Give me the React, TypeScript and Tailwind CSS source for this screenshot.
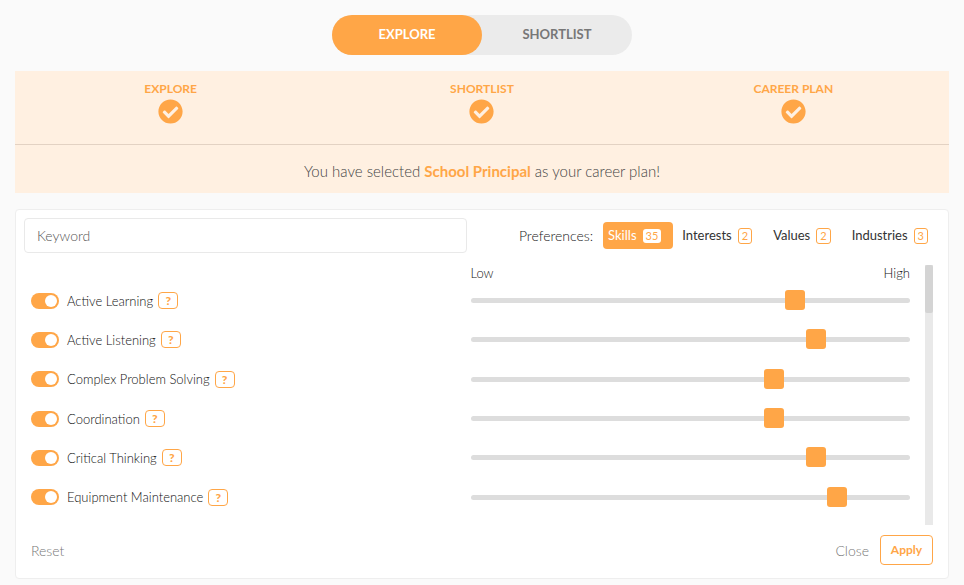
import { useState } from 'react';
import { FaCheckCircle } from 'react-icons/fa';

const steps = ['EXPLORE', 'SHORTLIST', 'CAREER PLAN'];

const preferences = [
  { name: 'Skills', count: 35 },
  { name: 'Interests', count: 2 },
  { name: 'Values', count: 2 },
  { name: 'Industries', count: 3 },
];

const skills = [
  { id: 'active-learning', name: 'Active Learning', level: 75 },
  { id: 'active-listening', name: 'Active Listening', level: 80 },
  { id: 'problem-solving', name: 'Complex Problem Solving', level: 70 },
  { id: 'coordination', name: 'Coordination', level: 70 },
  { id: 'critical-thinking', name: 'Critical Thinking', level: 80 },
  { id: 'maintenance', name: 'Equipment Maintenance', level: 85 },
];

function ViewSwitch() {
  return (
    <nav className="mx-auto flex w-75 rounded-full bg-[#ebebeb] text-[13px] font-bold">
      <button type="button" className="h-10 flex-1 rounded-full bg-[#ffa647] text-white">
        EXPLORE
      </button>
      <button type="button" className="h-10 flex-1 rounded-full text-[#777]">
        SHORTLIST
      </button>
    </nav>
  );
}

function PlanBanner() {
  return (
    <section className="mt-4 bg-[#fff0e1]">
      <ol className="grid h-[74px] grid-cols-3 border-b border-[#e3d2c3] pt-2.5">
        {steps.map((step) => (
          <li key={step} className="flex flex-col items-center text-[#ffa647]">
            <span className="text-[12px] leading-4 font-bold">{step}</span>
            <FaCheckCircle className="mt-0.5 size-[25px]" />
          </li>
        ))}
      </ol>
      <p className="pt-3.5 pb-2.5 text-center text-[15px] leading-6 text-[#444]">
        You have selected <strong className="font-bold text-[#ffa647]">School Principal</strong> as
        your career plan!
      </p>
    </section>
  );
}

function PreferenceTabs() {
  const [active, setActive] = useState('Skills');

  return (
    <div className="flex items-center justify-end gap-1 whitespace-nowrap text-[13px]">
      <span className="mr-1.5 text-[14px] leading-5 text-[#222]">Preferences:</span>
      {preferences.map(({ name, count }) => (
        <button
          key={name}
          type="button"
          onClick={() => setActive(name)}
          className={
            active === name
              ? 'flex h-[27px] items-center gap-1.5 rounded bg-[#ffa647] pr-3 pl-[5px] font-normal text-white'
              : 'flex h-[27px] items-center gap-1.5 rounded pr-3 pl-[5px] font-normal text-[#333]'
          }
        >
          {name}
          <span
            className={
              active === name
                ? 'rounded-[3px] bg-white px-[3px] text-[11px] leading-[14px] text-[#ffa647]'
                : 'rounded-[3px] border border-[#ffa647] px-[3px] text-[11px] leading-[14px] text-[#ffa647]'
            }
          >
            {count}
          </span>
        </button>
      ))}
    </div>
  );
}

function SkillRow({ id, name, level }: { id: string; name: string; level: number }) {
  return (
    <li className="grid flex-1 grid-cols-2 items-center">
      <div className="flex items-center">
        <input
          id={id}
          type="checkbox"
          role="switch"
          defaultChecked
          className="h-4 w-7 appearance-none rounded-full bg-[#ccc] p-0.5 before:block before:size-3 before:rounded-full before:bg-white checked:bg-[#ffa647] checked:before:translate-x-3"
        />
        <label htmlFor={id} className="ml-2 text-[13px] leading-5 text-[#111]">
          {name}
        </label>
        <button
          type="button"
          className="ml-[5px] h-[17px] w-5 rounded border border-[#ffa647] text-[12px] leading-[15px] font-black text-[#ffa647]"
        >
          ?
        </button>
      </div>
      <input
        type="range"
        aria-label={name}
        defaultValue={level}
        className="h-5 w-full appearance-none bg-transparent [&::-webkit-slider-runnable-track]:h-[5px] [&::-webkit-slider-runnable-track]:rounded-full [&::-webkit-slider-runnable-track]:bg-[#ddd] [&::-webkit-slider-thumb]:-mt-2 [&::-webkit-slider-thumb]:size-5 [&::-webkit-slider-thumb]:appearance-none [&::-webkit-slider-thumb]:rounded-[3px] [&::-webkit-slider-thumb]:bg-[#ffa647]"
      />
    </li>
  );
}

export default function App() {
  return (
    <main className="min-h-screen bg-[#fafafa] p-[15px] pb-1.5 font-['Lato',sans-serif] font-light">
      <ViewSwitch />
      <PlanBanner />
      <section className="mt-4 rounded border border-[#eee] bg-white p-2 pb-[13px]">
        <div className="grid grid-cols-2 gap-[30px]">
          <input
            type="text"
            aria-label="Keyword"
            placeholder="Keyword"
            className="h-[35px] rounded border border-[#e9e9e9] px-3 text-[14px] placeholder:text-[#555]"
          />
          <PreferenceTabs />
        </div>

        <div className="mt-3 flex h-65 px-[7px]">
          <div className="flex flex-1 flex-col pb-2">
            <div className="grid grid-cols-2 text-[13px] leading-4 text-[#111]">
              <div className="col-start-2 flex justify-between">
                <span>Low</span>
                <span>High</span>
              </div>
            </div>
            <ul className="flex flex-1 flex-col">
              {skills.map((skill) => (
                <SkillRow key={skill.id} {...skill} />
              ))}
            </ul>
          </div>
          <div className="ml-[15px] w-2 bg-[#e9e9e9]">
            <div className="h-12 rounded-xs bg-[#d4d4d4]" />
          </div>
        </div>

        <div className="mt-2.5 flex items-center px-[7px] text-[14px] text-[#777]">
          <button type="button">Reset</button>
          <button type="button" className="mr-[11px] ml-auto">
            Close
          </button>
          <button
            type="button"
            className="h-[30px] w-[53px] rounded border border-[#ffa647] text-[12px] font-bold text-[#ffa647]"
          >
            Apply
          </button>
        </div>
      </section>
    </main>
  );
}
